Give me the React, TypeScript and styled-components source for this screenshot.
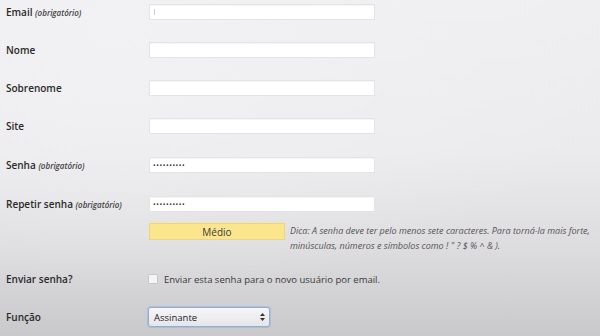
import styled, { createGlobalStyle } from "styled-components";

const Global = createGlobalStyle`
  html, body {
    margin: 0;
    padding: 0;
  }
  body {
    width: 600px;
    height: 336px;
    overflow: hidden;
    font-family: "Open Sans", "Liberation Sans", sans-serif;
    background:
      radial-gradient(ellipse 520px 260px at 20% 10%, rgba(242, 241, 243, 0.9) 0%, rgba(242, 241, 243, 0) 100%),
      linear-gradient(180deg, #efeef0 0%, #ebeaec 45%, #dcdbdd 75%, #c9c8ca 100%);
  }
`;

const Form = styled.div`
  display: flex;
  flex-direction: column;
  padding-top: 4px;
`;

const Row = styled.div<{ $gap: number }>`
  display: flex;
  align-items: center;
  margin-bottom: ${(p) => p.$gap}px;
`;

const Label = styled.div`
  width: 149px;
  padding-left: 6px;
  box-sizing: border-box;
  font-size: 10px;
  font-weight: 600;
  color: #2a2a2a;
  white-space: nowrap;
`;

const Req = styled.span`
  font-size: 8px;
  font-style: italic;
  font-weight: 600;
  color: #444;
`;

const Field = styled.div`
  width: 226px;
  height: 16px;
  box-sizing: border-box;
  background: #fff;
  border: 1px solid #e4e3e6;
  box-shadow: inset 0 1px 1px rgba(0, 0, 0, 0.04);
  display: flex;
  align-items: center;
  padding-left: 3px;
  font-size: 7px;
  letter-spacing: 0.6px;
  color: #333;
`;

const Cursor = styled.span`
  display: inline-block;
  width: 1px;
  height: 6px;
  background: #cfcfcf;
  margin-left: 1px;
`;

const Meter = styled.div`
  display: flex;
  align-items: flex-start;
  margin-left: 149px;
  margin-bottom: 19px;
`;

const Strength = styled.div`
  width: 136px;
  height: 17px;
  box-sizing: border-box;
  background: #fbe68e;
  border: 1px solid #eed677;
  display: flex;
  align-items: center;
  justify-content: center;
  font-size: 10px;
  color: #3a3a3a;
  flex-shrink: 0;
`;

const Hint = styled.div`
  margin-left: 5px;
  font-size: 9px;
  line-height: 15px;
  font-style: italic;
  color: #555;
  white-space: nowrap;
`;

const Check = styled.div`
  width: 10px;
  height: 10px;
  margin-left: -1px;
  margin-right: 6px;
  box-sizing: border-box;
  border: 1px solid #c8c8c8;
  background: #f4f4f4;
  border-radius: 1px;
`;

const CheckText = styled.span`
  font-size: 9.5px;
  color: #3a3a3a;
`;

const Select = styled.div`
  width: 122px;
  height: 20px;
  margin-left: -1px;
  box-sizing: border-box;
  border: 1px solid #8fb0d6;
  box-shadow: 0 0 0 1px rgba(140, 175, 215, 0.45);
  border-radius: 3px;
  background: linear-gradient(180deg, #f6f6f8 0%, #e6e6ea 100%);
  display: flex;
  align-items: center;
  justify-content: space-between;
  padding: 0 4px 0 5px;
  font-size: 9.5px;
  color: #222;
`;

const fields = [
  { label: "Email", req: true, value: "", cursor: true },
  { label: "Nome", req: false, value: "" },
  { label: "Sobrenome", req: false, value: "" },
  { label: "Site", req: false, value: "" },
  { label: "Senha", req: true, value: "••••••••••" },
  { label: "Repetir senha", req: true, value: "••••••••••" },
];

const gaps = [22, 22, 22, 23, 23, 11];

export default function App() {
  return (
    <>
      <Global />
      <Form>
        {fields.map((f, i) => (
          <Row key={f.label} $gap={gaps[i]}>
            <Label>
              {f.label} {f.req && <Req>(obrigatório)</Req>}
            </Label>
            <Field>
              {f.cursor && <Cursor />}
              {f.value}
            </Field>
          </Row>
        ))}
        <Meter>
          <Strength>Médio</Strength>
          <Hint>
            Dica: A senha deve ter pelo menos sete caracteres. Para torná-la mais forte,
            <br />
            minúsculas, números e símbolos como ! " ? $ % ^ &amp; ).
          </Hint>
        </Meter>
        <Row $gap={21}>
          <Label>Enviar senha?</Label>
          <Check />
          <CheckText>Enviar esta senha para o novo usuário por email.</CheckText>
        </Row>
        <Row $gap={0}>
          <Label>Função</Label>
          <Select>
            <span>Assinante</span>
            <svg width="5" height="8" viewBox="0 0 5 8">
              <path d="M2.5 0 L5 3 H0 Z M0 5 H5 L2.5 8 Z" fill="#333" />
            </svg>
          </Select>
        </Row>
      </Form>
    </>
  );
}
